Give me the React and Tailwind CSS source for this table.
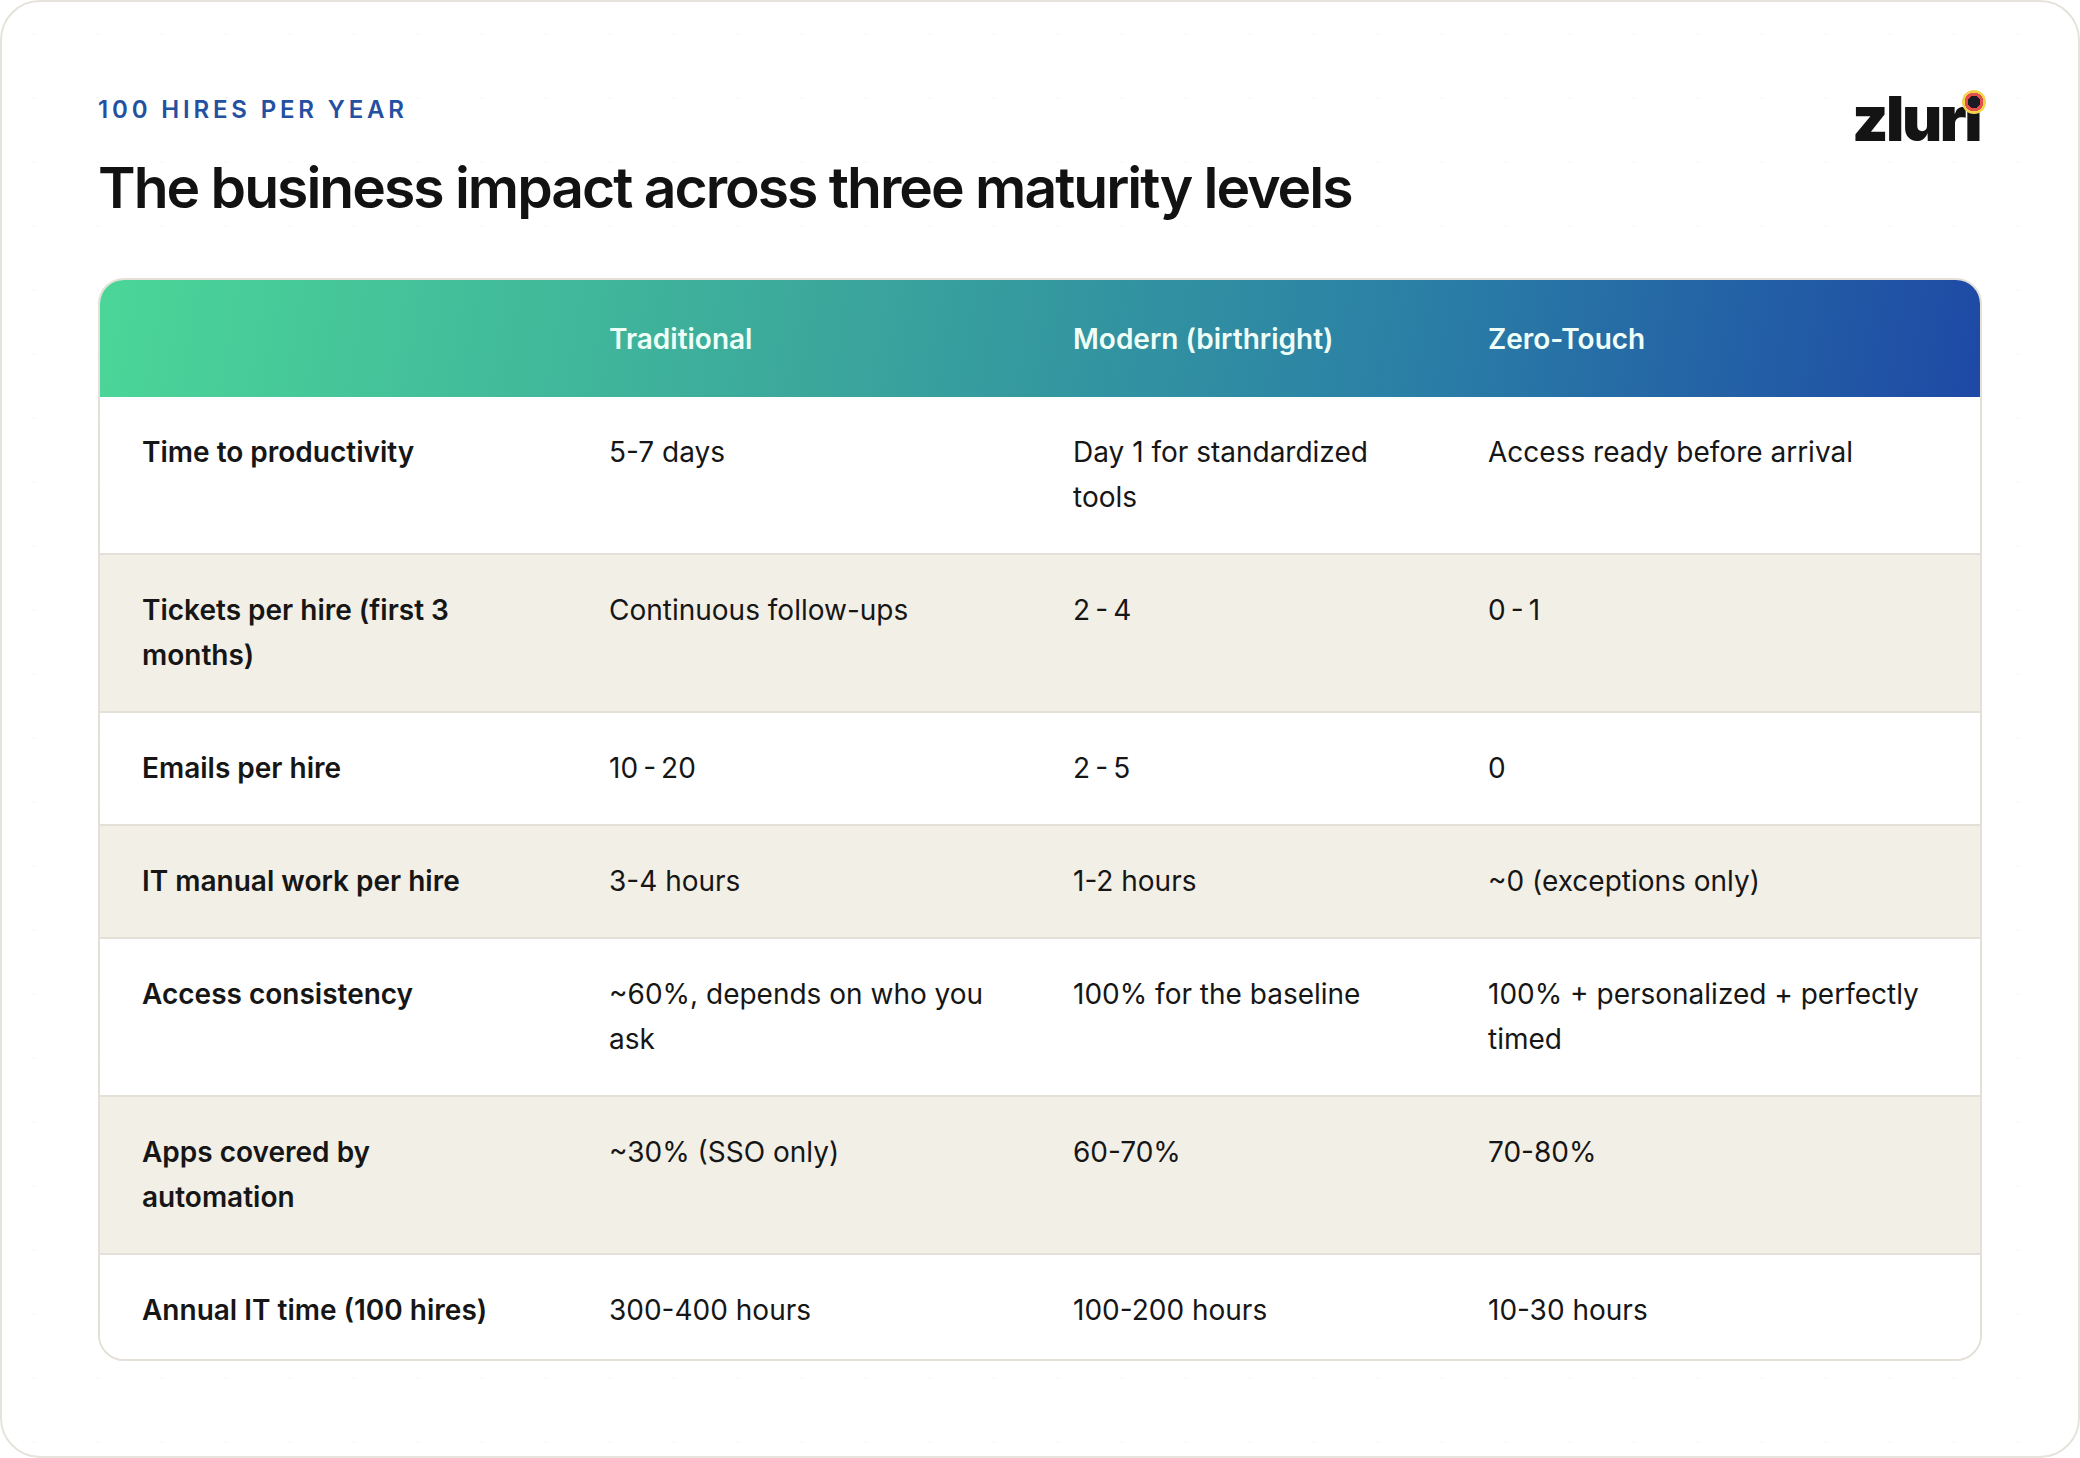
import React from "react";

const rows = [
  { label: ["Time to productivity"], values: [["5-7 days"], ["Day 1 for standardized", "tools"], ["Access ready before arrival"]] },
  { label: ["Tickets per hire (first 3", "months)"], values: [["Continuous follow-ups"], ["2\u2009-\u20094"], ["0\u2009-\u20091"]] },
  { label: ["Emails per hire"], values: [["10\u2009-\u200920"], ["2\u2009-\u20095"], ["0"]] },
  { label: ["IT manual work per hire"], values: [["3-4 hours"], ["1-2 hours"], ["~0 (exceptions only)"]] },
  { label: ["Access consistency"], values: [["~60%, depends on who you", "ask"], ["100% for the baseline"], ["100% + personalized + perfectly", "timed"]] },
  { label: ["Apps covered by", "automation"], values: [["~30% (SSO only)"], ["60-70%"], ["70-80%"]] },
  { label: ["Annual IT time (100 hires)"], values: [["300-400 hours"], ["100-200 hours"], ["10-30 hours"]] },
];

const cols = "grid grid-cols-[467px_464px_415px_1fr]";

function Lines({ lines }) {
  return lines.map((l, i) => (
    <div key={i} className="whitespace-nowrap">{l}</div>
  ));
}

function Logo() {
  return (
    <div className="flex items-end text-[62px] font-black leading-none tracking-[-0.04em] text-[#141414] font-['Inter',sans-serif]">
      <span>zlur</span>
      <span className="relative">
        ı
        <span className="absolute top-[2px] -left-[2px] w-[24px] h-[24px] rounded-full bg-[radial-gradient(circle,#1c1a24_0_36%,#e4514c_36%_55%,#f3d24c_55%_72%,#76d6ef_72%_100%)]" />
      </span>
    </div>
  );
}

export default function App() {
  return (
    <div className="w-[2080px] h-[1458px] bg-white font-['Inter',sans-serif] text-[#161616]">
      <div className="w-full h-full rounded-[40px] border-2 border-[#e6e3dc] px-[96px] pt-[92px] bg-[radial-gradient(#f6f7f8_1.5px,transparent_1.5px)] bg-[size:64px_64px]">
        <div className="flex justify-between items-start">
          <div>
            <div className="text-[24px] leading-[32px] font-semibold tracking-[0.16em] text-[#2350a0]">100 HIRES PER YEAR</div>
            <h1 className="mt-[26px] text-[57px] leading-[72px] font-semibold tracking-[-0.035em] text-[#121212]">
              The business impact across three maturity levels
            </h1>
          </div>
          <div className="-mt-[6px] pr-[2px]">
            <Logo />
          </div>
        </div>

        <div className="mt-[54px] rounded-[26px] border-2 border-[#e4e0d8] overflow-hidden bg-white">
          <div className={`${cols} h-[117px] items-center bg-[linear-gradient(100deg,#4bd698_0%,#3aa59c_40%,#2a7fa6_70%,#1e49a5_100%)] text-[28px] font-semibold text-[#effff8]`}>
            <div />
            <div className="px-[42px]">Traditional</div>
            <div className="px-[42px]">Modern (birthright)</div>
            <div className="px-[42px]">Zero-Touch</div>
          </div>
          {rows.map((r, i) => (
            <div
              key={i}
              className={`${cols} pt-[33px] ${i === rows.length - 1 ? "pb-[26px]" : "pb-[33px]"} text-[28px] leading-[45px] ${i > 0 ? "border-t-2 border-[#e4e0d8]" : ""} ${i % 2 === 1 ? "bg-[#f2efe6]" : "bg-white"}`}
            >
              <div className="px-[42px] font-semibold">
                <Lines lines={r.label} />
              </div>
              {r.values.map((v, j) => (
                <div key={j} className="px-[42px]">
                  <Lines lines={v} />
                </div>
              ))}
            </div>
          ))}
        </div>
      </div>
    </div>
  );
}
